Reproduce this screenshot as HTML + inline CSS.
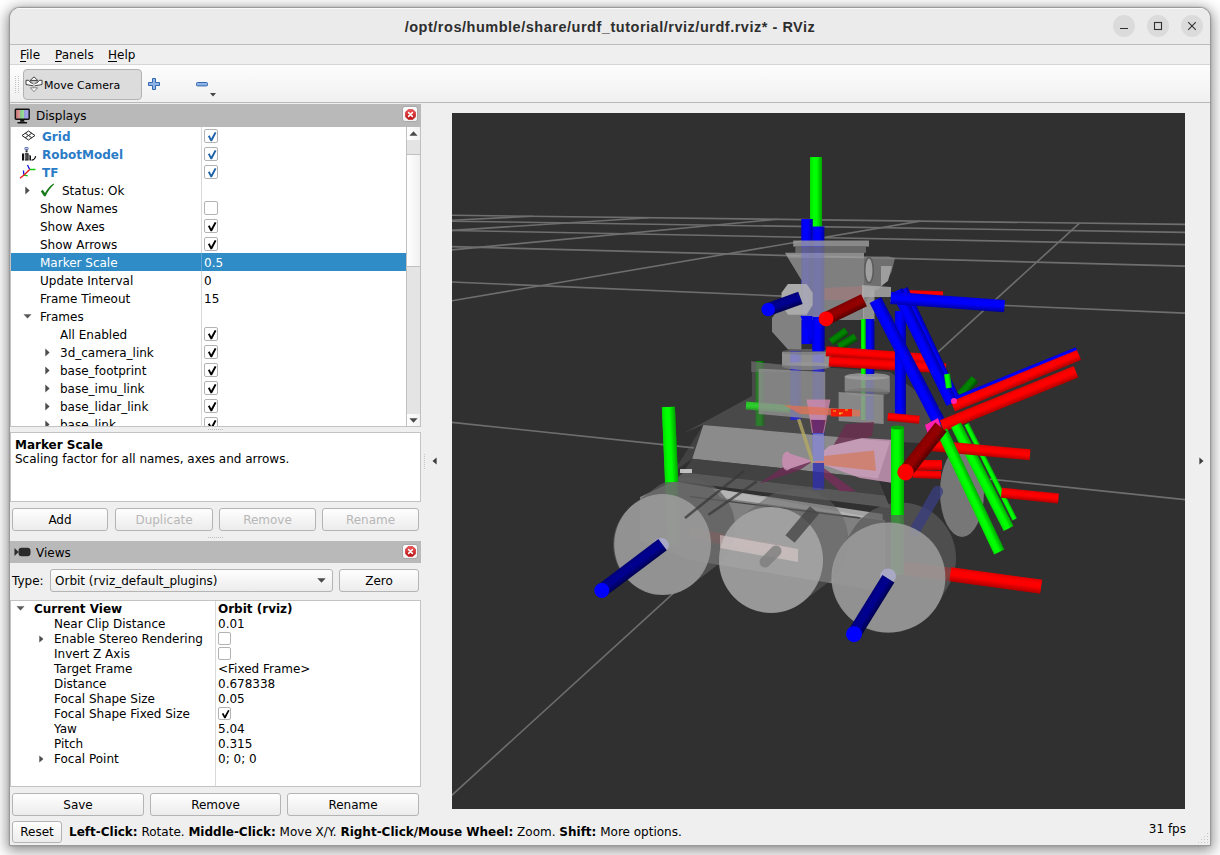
<!DOCTYPE html>
<html><head><meta charset="utf-8"><title>RViz</title>
<style>
*{box-sizing:border-box;margin:0;padding:0}
html,body{width:1220px;height:855px;overflow:hidden;background:#fff}
body{font-family:"DejaVu Sans","Liberation Sans",sans-serif;font-size:12px;color:#000;position:relative;line-height:1}
#win{position:absolute;left:9px;top:7px;width:1202px;height:839px;border:1px solid #9a9a9a;border-radius:11px 11px 0 0;background:#efefef;box-shadow:0 3px 14px 2px rgba(0,0,0,.44),0 0 2px rgba(0,0,0,.2);overflow:hidden}
#c{position:absolute;left:-10px;top:-8px;width:1220px;height:855px}
#c div,#c span,#c svg{position:absolute}
#title{left:10px;top:8px;width:1200px;height:37px;background:#ebebeb;border-top:1px solid #fafafa;border-bottom:1px solid #bcbcbc}
#ttext{left:10px;width:1200px;top:19.5px;text-align:center;font-family:"Liberation Sans","DejaVu Sans",sans-serif;font-weight:bold;font-size:14.5px;letter-spacing:.52px;color:#2e2e2e;white-space:nowrap}
.wb{top:15px;width:22px;height:22px;border-radius:11px;background:#dbdbdb}
#menu{left:10px;top:45px;width:1200px;height:20px;background:#efefef;border-bottom:1px solid #d6d6d6}
.mi{top:49px;white-space:nowrap}
.mi u{text-decoration:underline;text-underline-offset:1.5px}
#tool{left:10px;top:65px;width:1200px;height:38px;background:linear-gradient(#fdfdfd,#f0f0f0);border-bottom:1px solid #b8b8b8}
.t{white-space:nowrap;height:14px;line-height:14px}
.b{font-weight:bold}
.blue{color:#2b7bc7}
.hdr{background:#b9b9b9}
.btn{border:1px solid #b4b4b4;border-radius:3px;background:linear-gradient(#fefefe,#ececec);text-align:center;white-space:nowrap}
.btn.dis{color:#b7b7b7}
.cb{width:14px;height:14px;border:1px solid #b3b3b3;border-radius:2px;background:#fff}
.cbs{width:13px;height:13px;border:1px solid #b3b3b3;border-radius:2px;background:#fff}
.white{background:#fff}
</style></head><body>
<div id="win"><div id="c">
<div id="title"></div>
<div id="ttext">/opt/ros/humble/share/urdf_tutorial/rviz/urdf.rviz* - RViz</div>
<div class="wb" style="left:1113px"></div>
<div class="wb" style="left:1147px"></div>
<div class="wb" style="left:1181px"></div>
<svg style="left:1113px;top:15px" width="90" height="22" viewBox="0 0 90 22"><g stroke="#303030" stroke-width="1.1" fill="none"><path d="M7 13.5h8"/><rect x="41.5" y="7.5" width="7" height="7"/><path d="M75.2 7.2l7.6 7.6M82.8 7.2l-7.6 7.6"/></g></svg>
<div id="menu"></div>
<span class="mi" style="left:20px"><u>F</u>ile</span><span class="mi" style="left:55px"><u>P</u>anels</span><span class="mi" style="left:108px"><u>H</u>elp</span>
<div id="tool"></div>
<div style="left:23px;top:69px;width:119px;height:31px;border:1px solid #b3b3b3;border-radius:4px;background:#dcdcdc"></div>
<span class="t " style="left:44px;top:79px;font-size:11px">Move Camera</span>
<svg style="left:147px;top:77px" width="14" height="14" viewBox="0 0 14 14"><path d="M5.5 1.5h3v4h4v3h-4v4h-3v-4h-4v-3h4z" fill="#8fb4e6" stroke="#3566b0" stroke-width="1"/></svg>
<svg style="left:195px;top:81px" width="14" height="7" viewBox="0 0 14 7"><rect x="1.5" y="1.5" width="11" height="3.4" rx="1" fill="#8fb4e6" stroke="#3566b0" stroke-width="1"/></svg>
<svg style="left:210px;top:93px" width="6" height="4" viewBox="0 0 6 4"><path d="M0 0h6l-3 3.5z" fill="#444"/></svg>
<svg style="left:14px;top:75px" width="6" height="20" viewBox="0 0 6 20"><rect x="1" y="1" width="1" height="1" fill="#c2c2c2"/><rect x="4" y="1" width="1" height="1" fill="#c2c2c2"/><rect x="1" y="3" width="1" height="1" fill="#c2c2c2"/><rect x="4" y="3" width="1" height="1" fill="#c2c2c2"/><rect x="1" y="5" width="1" height="1" fill="#c2c2c2"/><rect x="4" y="5" width="1" height="1" fill="#c2c2c2"/><rect x="1" y="7" width="1" height="1" fill="#c2c2c2"/><rect x="4" y="7" width="1" height="1" fill="#c2c2c2"/><rect x="1" y="9" width="1" height="1" fill="#c2c2c2"/><rect x="4" y="9" width="1" height="1" fill="#c2c2c2"/><rect x="1" y="11" width="1" height="1" fill="#c2c2c2"/><rect x="4" y="11" width="1" height="1" fill="#c2c2c2"/><rect x="1" y="13" width="1" height="1" fill="#c2c2c2"/><rect x="4" y="13" width="1" height="1" fill="#c2c2c2"/><rect x="1" y="15" width="1" height="1" fill="#c2c2c2"/><rect x="4" y="15" width="1" height="1" fill="#c2c2c2"/><rect x="1" y="17" width="1" height="1" fill="#c2c2c2"/><rect x="4" y="17" width="1" height="1" fill="#c2c2c2"/></svg>
<svg style="left:25px;top:76px" width="18" height="17" viewBox="25 76 18 17"><path d="M30.600 82.400Q30.800 80.600 33 80.600M35 80.600Q37.200 80.600 37.400 82.400" fill="none" stroke="#2e2e2e" stroke-width=".9" stroke-dasharray="1.400 .8"/><path d="M26 80.300H28.800Q30 83.600 34 83.600Q38 83.600 39.200 80.300H42V84.500Q34 87.400 26 84.500Z" fill="#fff" stroke="#2e2e2e" stroke-width=".9" stroke-linejoin="round"/><path d="M34 80.400v7.400" stroke="#c2c2c2" stroke-width="1.800"/><path d="M34 76.900l3.800 3.500h-7.600z" fill="#fff" stroke="#2e2e2e" stroke-width=".9" stroke-linejoin="round"/><path d="M34 91.700l3.600-3.900h-7.200z" fill="#fff" stroke="#747474" stroke-width=".9" stroke-linejoin="round"/></svg>
<div class="hdr" style="left:10px;top:104px;width:411px;height:23px"></div>
<span class="t " style="left:36px;top:109px;">Displays</span>
<div style="left:402px;top:106px;width:16px;height:16px;border:1px solid #a9a9a9;border-radius:3px;background:linear-gradient(#fff,#f1f1f1)"></div>
<svg style="left:404.5px;top:108.5px" width="11" height="11" viewBox="0 0 11 11"><defs><linearGradient id="rg402106" x1="0" y1="0" x2="0" y2="1"><stop offset="0" stop-color="#f0585a"/><stop offset="1" stop-color="#b80f12"/></linearGradient></defs><path d="M3.3 .4h4.4l2.9 2.9v4.4l-2.9 2.9H3.3L.4 7.7V3.3z" fill="url(#rg402106)" stroke="#c4181b" stroke-width=".6"/><path d="M3.6 3.6l3.8 3.8M7.4 3.6L3.6 7.4" stroke="#fff" stroke-width="1.5" stroke-linecap="round"/></svg>
<div class="white" style="left:10px;top:127px;width:411px;height:300px;border-left:1px solid #c3c3c3;border-bottom:1px solid #c3c3c3"></div>
<div style="left:11px;top:253px;width:395px;height:18px;background:#308cc6"></div>
<div style="left:201px;top:127px;width:1px;height:300px;background:#d9d9d9"></div>
<div style="left:201px;top:253px;width:1px;height:18px;background:#5fa4d2"></div>
<div id="dtree" style="left:11px;top:127px;width:395px;height:299px;overflow:hidden">
<span class="t b blue" style="left:31px;top:3px;">Grid</span>
<div class="cb" style="left:193px;top:2px"><svg style="left:1.5px;top:.5px" width="10.5" height="11" viewBox="0 0 10 10"><path d="M.9 4.7l1.6-.8 1.5 2.9L7.4 .7l1.6.7-4.2 8.2H3.4z" fill="#1e63a8"/></svg></div>
<span class="t b blue" style="left:31px;top:21px;">RobotModel</span>
<div class="cb" style="left:193px;top:20px"><svg style="left:1.5px;top:.5px" width="10.5" height="11" viewBox="0 0 10 10"><path d="M.9 4.7l1.6-.8 1.5 2.9L7.4 .7l1.6.7-4.2 8.2H3.4z" fill="#1e63a8"/></svg></div>
<span class="t b blue" style="left:31px;top:39px;">TF</span>
<div class="cb" style="left:193px;top:38px"><svg style="left:1.5px;top:.5px" width="10.5" height="11" viewBox="0 0 10 10"><path d="M.9 4.7l1.6-.8 1.5 2.9L7.4 .7l1.6.7-4.2 8.2H3.4z" fill="#1e63a8"/></svg></div>
<svg style="left:14px;top:59px" width="5" height="9" viewBox="0 0 5 9"><path d="M.3 .5L4.6 4.5.3 8.5z" fill="#4d4d4d"/></svg>
<span class="t " style="left:51px;top:57px;">Status: Ok</span>
<span class="t " style="left:29px;top:75px;">Show Names</span>
<div class="cb" style="left:193px;top:74px"></div>
<span class="t " style="left:29px;top:93px;">Show Axes</span>
<div class="cb" style="left:193px;top:92px"><svg style="left:1.5px;top:.5px" width="10.5" height="11" viewBox="0 0 10 10"><path d="M.9 4.7l1.6-.8 1.5 2.9L7.4 .7l1.6.7-4.2 8.2H3.4z" fill="#000"/></svg></div>
<span class="t " style="left:29px;top:111px;">Show Arrows</span>
<div class="cb" style="left:193px;top:110px"><svg style="left:1.5px;top:.5px" width="10.5" height="11" viewBox="0 0 10 10"><path d="M.9 4.7l1.6-.8 1.5 2.9L7.4 .7l1.6.7-4.2 8.2H3.4z" fill="#000"/></svg></div>
<span class="t " style="left:29px;top:129px;color:#fff">Marker Scale</span>
<span class="t " style="left:193px;top:129px;color:#fff">0.5</span>
<span class="t " style="left:29px;top:147px;">Update Interval</span>
<span class="t " style="left:193px;top:147px;">0</span>
<span class="t " style="left:29px;top:165px;">Frame Timeout</span>
<span class="t " style="left:193px;top:165px;">15</span>
<svg style="left:12px;top:187px" width="9" height="5" viewBox="0 0 9 5"><path d="M.5 .3h8L4.5 4.6z" fill="#5a5a5a"/></svg>
<span class="t " style="left:29px;top:183px;">Frames</span>
<span class="t " style="left:49px;top:201px;">All Enabled</span>
<div class="cb" style="left:193px;top:200px"><svg style="left:1.5px;top:.5px" width="10.5" height="11" viewBox="0 0 10 10"><path d="M.9 4.7l1.6-.8 1.5 2.9L7.4 .7l1.6.7-4.2 8.2H3.4z" fill="#000"/></svg></div>
<svg style="left:34px;top:221px" width="5" height="9" viewBox="0 0 5 9"><path d="M.3 .5L4.6 4.5.3 8.5z" fill="#4d4d4d"/></svg>
<span class="t " style="left:49px;top:219px;">3d_camera_link</span>
<div class="cb" style="left:193px;top:218px"><svg style="left:1.5px;top:.5px" width="10.5" height="11" viewBox="0 0 10 10"><path d="M.9 4.7l1.6-.8 1.5 2.9L7.4 .7l1.6.7-4.2 8.2H3.4z" fill="#000"/></svg></div>
<svg style="left:34px;top:239px" width="5" height="9" viewBox="0 0 5 9"><path d="M.3 .5L4.6 4.5.3 8.5z" fill="#4d4d4d"/></svg>
<span class="t " style="left:49px;top:237px;">base_footprint</span>
<div class="cb" style="left:193px;top:236px"><svg style="left:1.5px;top:.5px" width="10.5" height="11" viewBox="0 0 10 10"><path d="M.9 4.7l1.6-.8 1.5 2.9L7.4 .7l1.6.7-4.2 8.2H3.4z" fill="#000"/></svg></div>
<svg style="left:34px;top:257px" width="5" height="9" viewBox="0 0 5 9"><path d="M.3 .5L4.6 4.5.3 8.5z" fill="#4d4d4d"/></svg>
<span class="t " style="left:49px;top:255px;">base_imu_link</span>
<div class="cb" style="left:193px;top:254px"><svg style="left:1.5px;top:.5px" width="10.5" height="11" viewBox="0 0 10 10"><path d="M.9 4.7l1.6-.8 1.5 2.9L7.4 .7l1.6.7-4.2 8.2H3.4z" fill="#000"/></svg></div>
<svg style="left:34px;top:275px" width="5" height="9" viewBox="0 0 5 9"><path d="M.3 .5L4.6 4.5.3 8.5z" fill="#4d4d4d"/></svg>
<span class="t " style="left:49px;top:273px;">base_lidar_link</span>
<div class="cb" style="left:193px;top:272px"><svg style="left:1.5px;top:.5px" width="10.5" height="11" viewBox="0 0 10 10"><path d="M.9 4.7l1.6-.8 1.5 2.9L7.4 .7l1.6.7-4.2 8.2H3.4z" fill="#000"/></svg></div>
<svg style="left:34px;top:293px" width="5" height="9" viewBox="0 0 5 9"><path d="M.3 .5L4.6 4.5.3 8.5z" fill="#4d4d4d"/></svg>
<span class="t " style="left:49px;top:291px;">base_link</span>
<div class="cb" style="left:193px;top:290px"><svg style="left:1.5px;top:.5px" width="10.5" height="11" viewBox="0 0 10 10"><path d="M.9 4.7l1.6-.8 1.5 2.9L7.4 .7l1.6.7-4.2 8.2H3.4z" fill="#000"/></svg></div>
<svg style="left:10px;top:3px" width="15" height="11" viewBox="0 0 15 11"><g fill="none" stroke="#222" stroke-width="1"><path d="M7.5 1L14 5.5 7.5 10 1 5.5z"/><path d="M4.2 3.2l6.6 4.6M10.8 3.2L4.2 7.8"/></g></svg>
<svg style="left:9px;top:19px" width="17" height="16" viewBox="0 0 17 16"><rect x="4.5" y="1.2" width="4" height="2.6" rx="1.2" fill="#223a8a"/><rect x="4.8" y="1.9" width="3.4" height=".9" fill="#dfe6ff"/><rect x="5.6" y="4.3" width="2" height="2" fill="#222"/><path d="M2 7.5h2v7H2zM4.8 7.2h3.8v7.3H4.8zM9.4 8.5l1.6 1.5v4.5H9.4z" fill="#111"/><path d="M5.6 8.2v5.5M7 8.2v5.5" stroke="#ddd" stroke-width=".5"/><path d="M11.5 14.2c2.5 0 3.5-1.5 4.2-4" fill="none" stroke="#111" stroke-width="1.2"/></svg>
<svg style="left:8px;top:37px" width="18" height="16" viewBox="0 0 18 16"><g fill="none" stroke-width="1.3"><path d="M8.5 1l2.2 4.5" stroke="#1414e6"/><path d="M4.5 6.5l.3 4.2" stroke="#1414e6"/><path d="M10.7 5.5h5.8" stroke="#14c814"/><path d="M5 11l3.8.9" stroke="#14c814"/><path d="M10.7 5.5L5 11" stroke="#e61414"/><path d="M5 11l-4 3.2" stroke="#e61414"/></g></svg>
<svg style="left:29px;top:56px" width="15" height="14" viewBox="0 0 15 14"><path d="M.8 8.2l2-1.4 2.2 3.2C7.5 5.6 10 2.8 13.6 .6l.6.7C10.8 4.2 8 8.2 5.6 13.2H4z" fill="#1a7a1a"/></svg>
</div>
<div style="left:406px;top:127px;width:15px;height:300px;background:#e4e4e4;border-left:1px solid #c0c0c0;border-right:1px solid #c0c0c0"></div>
<div style="left:407px;top:127px;width:13px;height:13px;background:linear-gradient(90deg,#fff,#f2f2f2)"></div>
<div style="left:407px;top:414px;width:13px;height:13px;background:linear-gradient(90deg,#fff,#f2f2f2)"></div>
<div style="left:406px;top:154px;width:15px;height:113px;background:linear-gradient(90deg,#fff,#f0f0f0);border:1px solid #c0c0c0"></div>
<svg style="left:409px;top:131px" width="9" height="5" viewBox="0 0 9 5"><path d="M4.5 .3L8.6 4.7H.4z" fill="#4a4a4a"/></svg>
<svg style="left:409px;top:418px" width="9" height="5" viewBox="0 0 9 5"><path d="M4.5 4.7L8.6 .3H.4z" fill="#4a4a4a"/></svg>
<div style="left:406px;top:426px;width:15px;height:1px;background:#c0c0c0"></div>
<svg style="left:13.5px;top:108px" width="16.5" height="16" viewBox="0 0 16 16" preserveAspectRatio="none"><defs><linearGradient id="mg" x1="0" y1="0" x2="1" y2="0"><stop offset="0" stop-color="#c77"/><stop offset=".3" stop-color="#d99"/><stop offset=".36" stop-color="#8c8"/><stop offset=".63" stop-color="#9d9"/><stop offset=".68" stop-color="#99d"/><stop offset="1" stop-color="#aae"/></linearGradient></defs><rect x=".6" y=".6" width="14.8" height="11.3" rx="1.4" fill="#111"/><rect x="2" y="2" width="12" height="8.5" fill="url(#mg)"/><path d="M6.3 12h3.4l.6 1.8H5.7z" fill="#111"/><rect x="3.2" y="14" width="9.6" height="1.5" rx=".7" fill="#111"/></svg>
<svg style="left:208px;top:429px" width="16" height="1" viewBox="0 0 16 1"><rect x="0" y="0" width="1" height="1" fill="#bdbdbd"/><rect x="2" y="0" width="1" height="1" fill="#bdbdbd"/><rect x="4" y="0" width="1" height="1" fill="#bdbdbd"/><rect x="6" y="0" width="1" height="1" fill="#bdbdbd"/><rect x="8" y="0" width="1" height="1" fill="#bdbdbd"/><rect x="10" y="0" width="1" height="1" fill="#bdbdbd"/><rect x="12" y="0" width="1" height="1" fill="#bdbdbd"/><rect x="14" y="0" width="1" height="1" fill="#bdbdbd"/></svg>
<svg style="left:208px;top:537px" width="16" height="1" viewBox="0 0 16 1"><rect x="0" y="0" width="1" height="1" fill="#bdbdbd"/><rect x="2" y="0" width="1" height="1" fill="#bdbdbd"/><rect x="4" y="0" width="1" height="1" fill="#bdbdbd"/><rect x="6" y="0" width="1" height="1" fill="#bdbdbd"/><rect x="8" y="0" width="1" height="1" fill="#bdbdbd"/><rect x="10" y="0" width="1" height="1" fill="#bdbdbd"/><rect x="12" y="0" width="1" height="1" fill="#bdbdbd"/><rect x="14" y="0" width="1" height="1" fill="#bdbdbd"/></svg>
<div class="white" style="left:10px;top:432px;width:411px;height:70px;border:1px solid #c3c3c3"></div>
<span class="t b" style="left:15px;top:438px;">Marker Scale</span>
<span class="t " style="left:15px;top:452px;">Scaling factor for all names, axes and arrows.</span>
<div class="btn" style="left:12px;top:508px;width:96px;height:23px;line-height:22px">Add</div>
<div class="btn dis" style="left:115px;top:508px;width:98px;height:23px;line-height:22px">Duplicate</div>
<div class="btn dis" style="left:219px;top:508px;width:97px;height:23px;line-height:22px">Remove</div>
<div class="btn dis" style="left:322px;top:508px;width:97px;height:23px;line-height:22px">Rename</div>
<div class="hdr" style="left:10px;top:541px;width:411px;height:22px"></div>
<span class="t " style="left:36px;top:546px;">Views</span>
<div style="left:402px;top:544px;width:16px;height:15px;border:1px solid #a9a9a9;border-radius:3px;background:linear-gradient(#fff,#f1f1f1)"></div>
<svg style="left:404.5px;top:546.0px" width="11" height="11" viewBox="0 0 11 11"><defs><linearGradient id="rg402544" x1="0" y1="0" x2="0" y2="1"><stop offset="0" stop-color="#f0585a"/><stop offset="1" stop-color="#b80f12"/></linearGradient></defs><path d="M3.3 .4h4.4l2.9 2.9v4.4l-2.9 2.9H3.3L.4 7.7V3.3z" fill="url(#rg402544)" stroke="#c4181b" stroke-width=".6"/><path d="M3.6 3.6l3.8 3.8M7.4 3.6L3.6 7.4" stroke="#fff" stroke-width="1.5" stroke-linecap="round"/></svg>
<svg style="left:14px;top:547px" width="17" height="10" viewBox="0 0 17 10"><path d="M.5 1l4 4-4 4z" fill="#2b2b2b"/><rect x="4.5" y=".8" width="12" height="8.4" rx="3" fill="#2b2b2b"/></svg>
<span class="t " style="left:12px;top:574px;">Type:</span>
<div class="btn" style="left:50px;top:569px;width:283px;height:23px"></div>
<span class="t " style="left:55px;top:574px;">Orbit (rviz_default_plugins)</span>
<svg style="left:317px;top:578px" width="9" height="5" viewBox="0 0 9 5"><path d="M.3 .3h8.4L4.5 4.8z" fill="#4a4a4a"/></svg>
<div class="btn" style="left:339px;top:569px;width:80px;height:23px;line-height:22px">Zero</div>
<div class="white" style="left:10px;top:600px;width:411px;height:187px;border:1px solid #c3c3c3"></div>
<div style="left:215px;top:601px;width:1px;height:185px;background:#d9d9d9"></div>
<svg style="left:16px;top:606px" width="9" height="5" viewBox="0 0 9 5"><path d="M.5 .3h8L4.5 4.6z" fill="#5a5a5a"/></svg>
<span class="t b" style="left:34px;top:602px;">Current View</span>
<span class="t b" style="left:218px;top:602px;">Orbit (rviz)</span>
<span class="t " style="left:54px;top:617px;">Near Clip Distance</span>
<span class="t " style="left:218px;top:617px;">0.01</span>
<svg style="left:39px;top:635px" width="5" height="8" viewBox="0 0 5 8"><path d="M.3 .4L4.4 4 .3 7.6z" fill="#4d4d4d"/></svg>
<span class="t " style="left:54px;top:632px;">Enable Stereo Rendering</span>
<div class="cbs" style="left:218px;top:632px"></div>
<span class="t " style="left:54px;top:647px;">Invert Z Axis</span>
<div class="cbs" style="left:218px;top:647px"></div>
<span class="t " style="left:54px;top:662px;">Target Frame</span>
<span class="t " style="left:218px;top:662px;">&lt;Fixed Frame&gt;</span>
<span class="t " style="left:54px;top:677px;">Distance</span>
<span class="t " style="left:218px;top:677px;">0.678338</span>
<span class="t " style="left:54px;top:692px;">Focal Shape Size</span>
<span class="t " style="left:218px;top:692px;">0.05</span>
<span class="t " style="left:54px;top:707px;">Focal Shape Fixed Size</span>
<div class="cbs" style="left:218px;top:707px"><svg style="left:1.5px;top:.5px" width="9.5" height="10" viewBox="0 0 10 10"><path d="M.9 4.7l1.6-.8 1.5 2.9L7.4 .7l1.6.7-4.2 8.2H3.4z" fill="#000"/></svg></div>
<span class="t " style="left:54px;top:722px;">Yaw</span>
<span class="t " style="left:218px;top:722px;">5.04</span>
<span class="t " style="left:54px;top:737px;">Pitch</span>
<span class="t " style="left:218px;top:737px;">0.315</span>
<svg style="left:39px;top:755px" width="5" height="8" viewBox="0 0 5 8"><path d="M.3 .4L4.4 4 .3 7.6z" fill="#4d4d4d"/></svg>
<span class="t " style="left:54px;top:752px;">Focal Point</span>
<span class="t " style="left:218px;top:752px;">0; 0; 0</span>
<div class="btn" style="left:12px;top:793px;width:132px;height:23px;line-height:22px">Save</div>
<div class="btn" style="left:150px;top:793px;width:131px;height:23px;line-height:22px">Remove</div>
<div class="btn" style="left:287px;top:793px;width:132px;height:23px;line-height:22px">Rename</div>
<div class="btn" style="left:12px;top:821px;width:50px;height:22px;line-height:21.5px">Reset</div>
<span class="t" style="left:69px;top:825px"><b>Left-Click:</b> Rotate. <b>Middle-Click:</b> Move X/Y. <b>Right-Click/Mouse Wheel:</b> Zoom. <b>Shift:</b> More options.</span>
<span class="t" style="left:1100px;top:822px;width:86px;text-align:right">31 fps</span>
<svg style="left:1197px;top:832px" width="12" height="12" viewBox="0 0 12 12"><rect x="10" y="1" width="1" height="1" fill="#c6c6c6"/><rect x="7" y="4" width="1" height="1" fill="#c6c6c6"/><rect x="10" y="4" width="1" height="1" fill="#c6c6c6"/><rect x="4" y="7" width="1" height="1" fill="#c6c6c6"/><rect x="7" y="7" width="1" height="1" fill="#c6c6c6"/><rect x="10" y="7" width="1" height="1" fill="#c6c6c6"/><rect x="1" y="10" width="1" height="1" fill="#c6c6c6"/><rect x="4" y="10" width="1" height="1" fill="#c6c6c6"/><rect x="7" y="10" width="1" height="1" fill="#c6c6c6"/><rect x="10" y="10" width="1" height="1" fill="#c6c6c6"/></svg>
<svg style="left:432px;top:457px" width="5" height="8" viewBox="0 0 5 8"><path d="M4.6 .4L.5 4l4.1 3.6z" fill="#3c3c3c"/></svg>
<svg style="left:1199px;top:457px" width="5" height="8" viewBox="0 0 5 8"><path d="M.4 .4L4.5 4 .4 7.6z" fill="#3c3c3c"/></svg>
<svg style="left:424px;top:454px" width="1" height="16" viewBox="0 0 1 16"><rect x="0" y="0" width="1" height="1" fill="#c6c6c6"/><rect x="0" y="2" width="1" height="1" fill="#c6c6c6"/><rect x="0" y="4" width="1" height="1" fill="#c6c6c6"/><rect x="0" y="6" width="1" height="1" fill="#c6c6c6"/><rect x="0" y="8" width="1" height="1" fill="#c6c6c6"/><rect x="0" y="10" width="1" height="1" fill="#c6c6c6"/><rect x="0" y="12" width="1" height="1" fill="#c6c6c6"/><rect x="0" y="14" width="1" height="1" fill="#c6c6c6"/></svg>
<div id="view" style="left:452px;top:113px;width:733px;height:696px;background:#303030;overflow:hidden">
<svg style="left:0;top:0" width="733" height="696" viewBox="452 113 733 696"><defs><linearGradient id="c1" gradientUnits="userSpaceOnUse" x1="810.0" y1="192.0" x2="822.0" y2="192.0"><stop offset="0" stop-color="#00dc00"/><stop offset=".3" stop-color="#00ff00"/><stop offset=".55" stop-color="#00ff00"/><stop offset="1" stop-color="#00a400"/></linearGradient><linearGradient id="c2" gradientUnits="userSpaceOnUse" x1="801.2" y1="281.5" x2="812.8" y2="281.5"><stop offset="0" stop-color="#0000dc"/><stop offset=".3" stop-color="#0000ff"/><stop offset=".55" stop-color="#0000ff"/><stop offset="1" stop-color="#0000a4"/></linearGradient><linearGradient id="c3" gradientUnits="userSpaceOnUse" x1="812.4" y1="358.2" x2="824.4" y2="358.2"><stop offset="0" stop-color="#0000dc"/><stop offset=".3" stop-color="#0000ff"/><stop offset=".55" stop-color="#0000ff"/><stop offset="1" stop-color="#0000a4"/></linearGradient><linearGradient id="c4" gradientUnits="userSpaceOnUse" x1="790.2" y1="385.5" x2="801.2" y2="385.5"><stop offset="0" stop-color="#0000dc"/><stop offset=".3" stop-color="#0000ff"/><stop offset=".55" stop-color="#0000ff"/><stop offset="1" stop-color="#0000a4"/></linearGradient><linearGradient id="c5" gradientUnits="userSpaceOnUse" x1="836.4" y1="333.1" x2="841.1" y2="339.6"><stop offset="0" stop-color="#006c00"/><stop offset=".3" stop-color="#008400"/><stop offset=".55" stop-color="#008400"/><stop offset="1" stop-color="#004800"/></linearGradient><linearGradient id="c6" gradientUnits="userSpaceOnUse" x1="845.3" y1="338.5" x2="849.4" y2="345.3"><stop offset="0" stop-color="#006c00"/><stop offset=".3" stop-color="#008400"/><stop offset=".55" stop-color="#008400"/><stop offset="1" stop-color="#004800"/></linearGradient><linearGradient id="c7" gradientUnits="userSpaceOnUse" x1="755.5" y1="393.5" x2="764.5" y2="393.5"><stop offset="0" stop-color="#006c00"/><stop offset=".3" stop-color="#008400"/><stop offset=".55" stop-color="#008400"/><stop offset="1" stop-color="#004800"/></linearGradient><linearGradient id="c8" gradientUnits="userSpaceOnUse" x1="768.3" y1="403.3" x2="767.7" y2="411.2"><stop offset="0" stop-color="#00dc00"/><stop offset=".3" stop-color="#00ff00"/><stop offset=".55" stop-color="#00ff00"/><stop offset="1" stop-color="#00a400"/></linearGradient><linearGradient id="c9" gradientUnits="userSpaceOnUse" x1="861.0" y1="369.5" x2="866.0" y2="369.5"><stop offset="0" stop-color="#00dc00"/><stop offset=".3" stop-color="#00ff00"/><stop offset=".55" stop-color="#00ff00"/><stop offset="1" stop-color="#00a400"/></linearGradient><linearGradient id="c10" gradientUnits="userSpaceOnUse" x1="865.8" y1="369.5" x2="874.2" y2="369.5"><stop offset="0" stop-color="#0000dc"/><stop offset=".3" stop-color="#0000ff"/><stop offset=".55" stop-color="#0000ff"/><stop offset="1" stop-color="#0000a4"/></linearGradient><linearGradient id="c11" gradientUnits="userSpaceOnUse" x1="971.9" y1="570.5" x2="970.1" y2="584.2"><stop offset="0" stop-color="#e00000"/><stop offset=".3" stop-color="#ff0000"/><stop offset=".55" stop-color="#ff0000"/><stop offset="1" stop-color="#b40000"/></linearGradient><linearGradient id="c12" gradientUnits="userSpaceOnUse" x1="891.0" y1="501.0" x2="904.0" y2="501.0"><stop offset="0" stop-color="#00dc00"/><stop offset=".3" stop-color="#00ff00"/><stop offset=".55" stop-color="#00ff00"/><stop offset="1" stop-color="#00a400"/></linearGradient><linearGradient id="c13" gradientUnits="userSpaceOnUse" x1="664.7" y1="476.3" x2="677.7" y2="475.7"><stop offset="0" stop-color="#00dc00"/><stop offset=".3" stop-color="#00ff00"/><stop offset=".55" stop-color="#00ff00"/><stop offset="1" stop-color="#00a400"/></linearGradient><linearGradient id="c14" gradientUnits="userSpaceOnUse" x1="741.0" y1="537.1" x2="739.0" y2="547.9"><stop offset="0" stop-color="#e00000"/><stop offset=".3" stop-color="#ff0000"/><stop offset=".55" stop-color="#ff0000"/><stop offset="1" stop-color="#b40000"/></linearGradient><linearGradient id="c15" gradientUnits="userSpaceOnUse" x1="812.4" y1="334.0" x2="824.4" y2="334.0"><stop offset="0" stop-color="#0000dc"/><stop offset=".3" stop-color="#0000ff"/><stop offset=".55" stop-color="#0000ff"/><stop offset="1" stop-color="#0000a4"/></linearGradient><linearGradient id="c16" gradientUnits="userSpaceOnUse" x1="782.1" y1="297.6" x2="786.5" y2="309.8"><stop offset="0" stop-color="#000078"/><stop offset=".3" stop-color="#00008f"/><stop offset=".55" stop-color="#00008f"/><stop offset="1" stop-color="#000050"/></linearGradient><linearGradient id="c17" gradientUnits="userSpaceOnUse" x1="842.0" y1="303.5" x2="848.0" y2="315.6"><stop offset="0" stop-color="#7a0000"/><stop offset=".3" stop-color="#930000"/><stop offset=".55" stop-color="#930000"/><stop offset="1" stop-color="#520000"/></linearGradient><linearGradient id="c18" gradientUnits="userSpaceOnUse" x1="861.0" y1="346.5" x2="866.0" y2="346.5"><stop offset="0" stop-color="#00dc00"/><stop offset=".3" stop-color="#00ff00"/><stop offset=".55" stop-color="#00ff00"/><stop offset="1" stop-color="#00a400"/></linearGradient><linearGradient id="c19" gradientUnits="userSpaceOnUse" x1="865.8" y1="346.5" x2="874.2" y2="346.5"><stop offset="0" stop-color="#0000dc"/><stop offset=".3" stop-color="#0000ff"/><stop offset=".55" stop-color="#0000ff"/><stop offset="1" stop-color="#0000a4"/></linearGradient><linearGradient id="c20" gradientUnits="userSpaceOnUse" x1="880.4" y1="350.3" x2="879.6" y2="360.3"><stop offset="0" stop-color="#e00000"/><stop offset=".3" stop-color="#ff0000"/><stop offset=".55" stop-color="#ff0000"/><stop offset="1" stop-color="#b40000"/></linearGradient><linearGradient id="c21" gradientUnits="userSpaceOnUse" x1="887.8" y1="360.0" x2="887.2" y2="370.0"><stop offset="0" stop-color="#e00000"/><stop offset=".3" stop-color="#ff0000"/><stop offset=".55" stop-color="#ff0000"/><stop offset="1" stop-color="#b40000"/></linearGradient><linearGradient id="c22" gradientUnits="userSpaceOnUse" x1="924.6" y1="290.6" x2="924.4" y2="295.6"><stop offset="0" stop-color="#e00000"/><stop offset=".3" stop-color="#ff0000"/><stop offset=".55" stop-color="#ff0000"/><stop offset="1" stop-color="#b40000"/></linearGradient><linearGradient id="c23" gradientUnits="userSpaceOnUse" x1="894.9" y1="365.5" x2="905.9" y2="365.5"><stop offset="0" stop-color="#0000dc"/><stop offset=".3" stop-color="#0000ff"/><stop offset=".55" stop-color="#0000ff"/><stop offset="1" stop-color="#0000a4"/></linearGradient><linearGradient id="c24" gradientUnits="userSpaceOnUse" x1="926.4" y1="345.6" x2="933.6" y2="342.1"><stop offset="0" stop-color="#0000dc"/><stop offset=".3" stop-color="#0000ff"/><stop offset=".55" stop-color="#0000ff"/><stop offset="1" stop-color="#0000a4"/></linearGradient><linearGradient id="c25" gradientUnits="userSpaceOnUse" x1="919.1" y1="349.7" x2="929.9" y2="344.4"><stop offset="0" stop-color="#0000dc"/><stop offset=".3" stop-color="#0000ff"/><stop offset=".55" stop-color="#0000ff"/><stop offset="1" stop-color="#0000a4"/></linearGradient><linearGradient id="c26" gradientUnits="userSpaceOnUse" x1="948.0" y1="295.9" x2="947.2" y2="308.1"><stop offset="0" stop-color="#0000dc"/><stop offset=".3" stop-color="#0000ff"/><stop offset=".55" stop-color="#0000ff"/><stop offset="1" stop-color="#0000a4"/></linearGradient><linearGradient id="c27" gradientUnits="userSpaceOnUse" x1="901.9" y1="365.0" x2="913.5" y2="359.0"><stop offset="0" stop-color="#0000dc"/><stop offset=".3" stop-color="#0000ff"/><stop offset=".55" stop-color="#0000ff"/><stop offset="1" stop-color="#0000a4"/></linearGradient><linearGradient id="c28" gradientUnits="userSpaceOnUse" x1="903.9" y1="414.3" x2="903.2" y2="422.3"><stop offset="0" stop-color="#e00000"/><stop offset=".3" stop-color="#ff0000"/><stop offset=".55" stop-color="#ff0000"/><stop offset="1" stop-color="#b40000"/></linearGradient><linearGradient id="c29" gradientUnits="userSpaceOnUse" x1="964.2" y1="384.0" x2="971.0" y2="389.9"><stop offset="0" stop-color="#006c00"/><stop offset=".3" stop-color="#008400"/><stop offset=".55" stop-color="#008400"/><stop offset="1" stop-color="#004800"/></linearGradient><linearGradient id="c30" gradientUnits="userSpaceOnUse" x1="945.0" y1="381.4" x2="951.0" y2="380.6"><stop offset="0" stop-color="#00dc00"/><stop offset=".3" stop-color="#00ff00"/><stop offset=".55" stop-color="#00ff00"/><stop offset="1" stop-color="#00a400"/></linearGradient><linearGradient id="c31" gradientUnits="userSpaceOnUse" x1="1015.5" y1="371.7" x2="1019.0" y2="380.1"><stop offset="0" stop-color="#0000dc"/><stop offset=".3" stop-color="#0000ff"/><stop offset=".55" stop-color="#0000ff"/><stop offset="1" stop-color="#0000a4"/></linearGradient><linearGradient id="c32" gradientUnits="userSpaceOnUse" x1="1013.9" y1="375.7" x2="1018.1" y2="385.8"><stop offset="0" stop-color="#e00000"/><stop offset=".3" stop-color="#ff0000"/><stop offset=".55" stop-color="#ff0000"/><stop offset="1" stop-color="#b40000"/></linearGradient><linearGradient id="c33" gradientUnits="userSpaceOnUse" x1="1006.7" y1="393.2" x2="1011.3" y2="404.5"><stop offset="0" stop-color="#e00000"/><stop offset=".3" stop-color="#ff0000"/><stop offset=".55" stop-color="#ff0000"/><stop offset="1" stop-color="#b40000"/></linearGradient><linearGradient id="c34" gradientUnits="userSpaceOnUse" x1="988.4" y1="472.8" x2="992.9" y2="470.5"><stop offset="0" stop-color="#00dc00"/><stop offset=".3" stop-color="#00ff00"/><stop offset=".55" stop-color="#00ff00"/><stop offset="1" stop-color="#00a400"/></linearGradient><linearGradient id="c35" gradientUnits="userSpaceOnUse" x1="977.4" y1="479.3" x2="987.2" y2="474.3"><stop offset="0" stop-color="#00dc00"/><stop offset=".3" stop-color="#00ff00"/><stop offset=".55" stop-color="#00ff00"/><stop offset="1" stop-color="#00a400"/></linearGradient><linearGradient id="c36" gradientUnits="userSpaceOnUse" x1="980.4" y1="444.7" x2="979.3" y2="455.7"><stop offset="0" stop-color="#e00000"/><stop offset=".3" stop-color="#ff0000"/><stop offset=".55" stop-color="#ff0000"/><stop offset="1" stop-color="#b40000"/></linearGradient><linearGradient id="c37" gradientUnits="userSpaceOnUse" x1="965.5" y1="493.9" x2="975.8" y2="489.1"><stop offset="0" stop-color="#00dc00"/><stop offset=".3" stop-color="#00ff00"/><stop offset=".55" stop-color="#00ff00"/><stop offset="1" stop-color="#00a400"/></linearGradient><linearGradient id="c38" gradientUnits="userSpaceOnUse" x1="1030.4" y1="490.6" x2="1029.4" y2="500.5"><stop offset="0" stop-color="#e00000"/><stop offset=".3" stop-color="#ff0000"/><stop offset=".55" stop-color="#ff0000"/><stop offset="1" stop-color="#b40000"/></linearGradient><linearGradient id="c39" gradientUnits="userSpaceOnUse" x1="929.5" y1="460.0" x2="929.5" y2="470.0"><stop offset="0" stop-color="#e00000"/><stop offset=".3" stop-color="#ff0000"/><stop offset=".55" stop-color="#ff0000"/><stop offset="1" stop-color="#b40000"/></linearGradient><linearGradient id="c40" gradientUnits="userSpaceOnUse" x1="927.1" y1="470.5" x2="926.9" y2="478.5"><stop offset="0" stop-color="#e00000"/><stop offset=".3" stop-color="#ff0000"/><stop offset=".55" stop-color="#ff0000"/><stop offset="1" stop-color="#b40000"/></linearGradient><linearGradient id="c41" gradientUnits="userSpaceOnUse" x1="891.0" y1="471.0" x2="904.0" y2="471.0"><stop offset="0" stop-color="#00dc00"/><stop offset=".3" stop-color="#00ff00"/><stop offset=".55" stop-color="#00ff00"/><stop offset="1" stop-color="#00a400"/></linearGradient><linearGradient id="c42" gradientUnits="userSpaceOnUse" x1="917.5" y1="445.1" x2="929.0" y2="454.1"><stop offset="0" stop-color="#7a0000"/><stop offset=".3" stop-color="#930000"/><stop offset=".55" stop-color="#930000"/><stop offset="1" stop-color="#520000"/></linearGradient><linearGradient id="c43" gradientUnits="userSpaceOnUse" x1="628.0" y1="562.0" x2="636.4" y2="573.1"><stop offset="0" stop-color="#000078"/><stop offset=".3" stop-color="#00008f"/><stop offset=".55" stop-color="#00008f"/><stop offset="1" stop-color="#000050"/></linearGradient><linearGradient id="c44" gradientUnits="userSpaceOnUse" x1="865.3" y1="602.8" x2="877.1" y2="610.1"><stop offset="0" stop-color="#000078"/><stop offset=".3" stop-color="#00008f"/><stop offset=".55" stop-color="#00008f"/><stop offset="1" stop-color="#000050"/></linearGradient><linearGradient id="c45" gradientUnits="userSpaceOnUse" x1="996.6" y1="573.5" x2="994.7" y2="587.2"><stop offset="0" stop-color="#e00000"/><stop offset=".3" stop-color="#ff0000"/><stop offset=".55" stop-color="#ff0000"/><stop offset="1" stop-color="#b40000"/></linearGradient><linearGradient id="c46" gradientUnits="userSpaceOnUse" x1="663.6" y1="444.8" x2="676.6" y2="444.2"><stop offset="0" stop-color="#00dc00"/><stop offset=".3" stop-color="#00ff00"/><stop offset=".55" stop-color="#00ff00"/><stop offset="1" stop-color="#00a400"/></linearGradient></defs>
<g stroke="#6e6e6e" stroke-width="1.6" fill="none">
<path d="M440.0 220.8L532.7 216.2"/>
<path d="M440.0 231.2L648.8 217.7"/>
<path d="M440.0 251.0L777.2 219.3"/>
<path d="M440.0 302.8L919.9 221.1"/>
<path d="M440.0 806.0L702.0 567.2"/>
<path d="M936.0 353.9L1079.5 223.1"/>
<path d="M440.0 421.1L694.0 447.9"/>
<path d="M990.0 479.1L1200.0 501.2"/>
<path d="M440.0 281.5L783.0 296.1"/>
<path d="M890.0 300.6L1200.0 313.8"/>
<path d="M440.0 246.3L1200.0 266.5"/>
<path d="M440.0 230.2L1200.0 244.9"/>
<path d="M440.0 221.0L1200.0 232.6"/>
<path d="M440.0 215.1L1200.0 224.6"/>
</g>
<line x1="816.0" y1="157.0" x2="816.0" y2="227.0" stroke="url(#c1)" stroke-width="12"/>
<line x1="807.0" y1="219.0" x2="807.0" y2="344.0" stroke="url(#c2)" stroke-width="11.5"/>
<line x1="818.4" y1="226.5" x2="818.4" y2="490.0" stroke="url(#c3)" stroke-width="12"/>
<line x1="795.7" y1="351.0" x2="795.7" y2="420.0" stroke="url(#c4)" stroke-width="11"/>
<ellipse cx="962" cy="492" rx="22" ry="45" fill="rgba(150,150,150,0.7)" />
<line x1="831.0" y1="342.0" x2="846.5" y2="330.7" stroke="url(#c5)" stroke-width="8"/>
<line x1="839.0" y1="347.0" x2="855.7" y2="336.8" stroke="url(#c6)" stroke-width="8"/>
<line x1="760.0" y1="361.0" x2="760.0" y2="426.0" stroke="url(#c7)" stroke-width="9"/>
<line x1="746.0" y1="405.5" x2="790.0" y2="409.0" stroke="url(#c8)" stroke-width="8"/>
<line x1="863.5" y1="319.0" x2="863.5" y2="420.0" stroke="url(#c9)" stroke-width="5"/>
<line x1="870.0" y1="319.0" x2="870.0" y2="420.0" stroke="url(#c10)" stroke-width="8.5"/>
<line x1="901.0" y1="568.0" x2="1041.0" y2="586.7" stroke="url(#c11)" stroke-width="13.8"/>
<line x1="897.5" y1="427.0" x2="897.5" y2="575.0" stroke="url(#c12)" stroke-width="13"/>
<line x1="668.4" y1="407.0" x2="674.0" y2="545.0" stroke="url(#c13)" stroke-width="13"/>
<line x1="690.0" y1="533.0" x2="790.0" y2="552.0" stroke="url(#c14)" stroke-width="11"/>
<rect x="793.2" y="240.5" width="75.8" height="6.1" fill="rgba(160,160,160,0.8)" />
<rect x="795.3" y="246.6" width="70.7" height="6.2" fill="rgba(118,118,118,0.8)" />
<polygon points="785.0,252.8 864.0,252.8 864.0,258.0 788.0,258.0" fill="rgba(162,162,162,0.8)" />
<polygon points="788.0,258.0 864.0,258.0 864.0,320.0 801.4,320.0 801.4,280.0" fill="rgba(148,148,148,0.8)" />
<rect x="863" y="287" width="11.5" height="34.0" fill="rgba(170,170,170,0.8)" />
<polygon points="824.4,288.0 864.0,286.0 864.0,300.0 824.4,300.0" fill="rgba(215,120,125,.28)" />
<polygon points="864.0,256.5 888.5,256.5 895.0,258.0 891.5,272.0 886.5,281.5 880.0,288.0 872.0,292.0 864.0,306.0" fill="rgba(128,128,128,0.8)" />
<polygon points="881.0,266.0 892.0,266.0 888.0,281.0 881.0,286.0" fill="rgba(170,170,170,0.8)" />
<polygon points="862.0,285.0 891.0,287.0 891.0,297.0 862.0,297.0" fill="rgba(175,175,175,0.8)" />
<ellipse cx="869" cy="270.2" rx="4.3" ry="12.5" fill="rgba(165,165,165,0.9)" stroke="#5c5c5c" stroke-width="1.6"/>
<polygon points="772.0,318.0 781.6,305.0 781.6,292.7 788.0,284.0 801.4,284.0 801.4,349.5 788.0,349.5 772.0,331.7" fill="rgba(150,150,150,0.8)" />
<polygon points="788.0,284.0 806.6,284.0 812.7,292.7 812.7,305.0 806.6,314.7 788.0,314.7 781.6,305.0 781.6,292.7" fill="rgba(186,186,186,0.72)" />
<polygon points="782.0,352.0 831.0,352.0 831.0,366.0 782.0,366.0" fill="rgba(175,175,175,0.75)" />
<ellipse cx="806.5" cy="366" rx="24.5" ry="4" fill="rgba(150,150,150,0.8)" />
<ellipse cx="806.5" cy="352" rx="24.5" ry="3" fill="rgba(120,120,120,0.6)" />
<polygon points="751.0,361.0 790.0,366.0 790.0,372.0 751.0,372.0" fill="rgba(110,110,110,0.55)" />
<polygon points="758.6,368.7 825.2,372.0 825.2,420.0 758.6,414.0" fill="rgba(160,160,160,0.8)" />
<polygon points="844.7,376.0 889.8,377.0 889.8,392.0 844.7,391.0" fill="rgba(165,165,165,0.8)" />
<ellipse cx="867.2" cy="376.5" rx="22.5" ry="3.5" fill="rgba(185,185,185,0.8)" />
<ellipse cx="867.2" cy="392" rx="22.5" ry="4" fill="rgba(120,120,120,0.7)" />
<polygon points="838.6,392.0 883.6,395.0 883.6,424.0 838.6,421.0" fill="rgba(170,170,170,0.8)" />
<polygon points="684.0,433.0 752.0,396.0 752.0,362.0 890.0,372.0 940.0,408.0 940.0,444.0 890.0,441.5 703.0,425.0" fill="rgba(120,120,120,0.36)" />
<polygon points="674.0,471.0 703.3,425.0 692.2,458.7" fill="rgba(110,110,110,0.3)" />
<polygon points="703.3,425.0 890.0,441.5 878.0,478.4 692.2,458.7" fill="rgba(178,178,178,0.7)" />
<polygon points="692.2,458.7 878.0,478.4 885.0,495.6 683.6,472.2" fill="rgba(72,72,72,0.75)" />
<polygon points="683.6,472.2 885.0,495.6 890.0,508.0 673.8,480.8" fill="rgba(105,105,105,0.7)" />
<rect x="680" y="469" width="12.0" height="4.0" fill="rgba(215,215,215,0.85)" />
<g opacity=".78">
<polygon points="759.7,483.4 790.0,462.0 813.0,461.0 800.0,470.0" fill="#6e2a55" />
<polygon points="817.0,463.0 856.0,491.6 840.0,491.0 813.0,468.0" fill="#7a2d5c" />
<polygon points="833.0,446.0 846.0,424.0 874.0,422.0 872.0,436.0 820.0,458.0" fill="#6d2c50" />
<polygon points="813.0,461.0 829.0,446.0 862.0,438.0 895.0,440.0 893.0,483.0 860.0,478.0" fill="#d3a0c2" />
<polygon points="813.0,461.0 785.0,452.0 786.0,470.0" fill="#d38fb8" />
<ellipse cx="787" cy="461" rx="5" ry="9.5" fill="#d38fb8"/>
<polygon points="815.0,457.0 874.0,450.6 876.0,471.0 815.0,464.0" fill="#e2806e" />
<polygon points="806.5,399.4 830.4,399.4 824.0,433.0 812.0,433.0" fill="#d48ab0" />
<polygon points="811.0,420.0 825.5,420.0 823.0,433.0 813.0,433.0" fill="#7e2d55" />
<path d="M798.6 419L813 463" stroke="#b4aa62" stroke-width="3.5" fill="none"/>
<rect x="813" y="433.5" width="11.0" height="27.5" fill="#8a8ac4" />
<rect x="813" y="463" width="11.0" height="24.5" fill="#3232a4" />
</g>
<polygon points="784.0,405.0 860.0,410.0 860.0,416.5 800.0,414.0" fill="rgba(226,112,80,.75)" />
<rect x="831" y="409" width="21.0" height="7.5" fill="#f41a08" />
<path d="M833 411h3m3 2h4m2-3h3m-9 4h2" stroke="#e8c020" stroke-width="1.2" fill="none"/>
<polygon points="640.0,497.0 674.0,481.0 712.0,488.0 885.0,520.0 885.0,592.0 690.0,560.0 640.0,540.0" fill="rgba(160,160,160,0.72)" />
<polygon points="712.5,488.4 882.6,514.0 882.6,520.2 720.7,497.7" fill="rgba(192,192,192,0.8)" />
<path d="M690 496.6L860 518" stroke="#444" stroke-width="1.4" fill="none"/>
<line x1="685.6" y1="527" x2="662.6" y2="544.6" stroke="rgba(92,92,92,0.7)" stroke-width="99" stroke-linecap="round"/>
<ellipse cx="662.6" cy="544.6" rx="48.4" ry="50.5" fill="rgba(158,158,158,0.85)" />
<line x1="796" y1="541" x2="771" y2="560" stroke="rgba(95,95,95,0.5)" stroke-width="105" stroke-linecap="round"/>
<ellipse cx="771" cy="560" rx="52" ry="53" fill="rgba(172,172,172,0.8)" />
<polygon points="720.0,535.0 798.0,549.0 798.0,562.0 720.0,548.0" fill="rgba(225,208,208,.55)" />
<line x1="814.5" y1="510" x2="790" y2="539" stroke="rgba(70,70,70,.8)" stroke-width="12"/>
<line x1="776" y1="551" x2="765" y2="562" stroke="rgba(125,125,125,.8)" stroke-width="11" stroke-linecap="round"/>
<path d="M744 471L685 518M756.7 481.5L708.5 514.8" stroke="rgba(56,56,56,.75)" stroke-width="2.6" fill="none"/>
<line x1="900.5" y1="558" x2="888.4" y2="577.5" stroke="rgba(90,90,90,0.72)" stroke-width="111" stroke-linecap="round"/>
<line x1="937.6" y1="491.4" x2="914.6" y2="530.7" stroke="rgba(56,62,128,.75)" stroke-width="11" stroke-linecap="round"/>
<ellipse cx="888.4" cy="577.5" rx="57" ry="55" fill="rgba(158,158,158,0.85)" />
<ellipse cx="661" cy="545" rx="8" ry="7" fill="#a9a9c6"/>
<ellipse cx="888" cy="576" rx="8" ry="7.5" fill="#a9a9c6"/>
<line x1="818.4" y1="317.0" x2="818.4" y2="351.0" stroke="url(#c15)" stroke-width="12"/>
<polygon points="800.5,316.0 812.5,316.0 812.5,343.0" fill="#0000f0" />
<line x1="768.2" y1="309.5" x2="800.4" y2="297.9" stroke="url(#c16)" stroke-width="13"/>
<circle cx="768.2" cy="309.5" r="6.8" fill="#0000ff"/>
<line x1="826.0" y1="318.8" x2="864.0" y2="300.3" stroke="url(#c17)" stroke-width="13.5"/>
<circle cx="826.0" cy="318.8" r="7.4" fill="#ff0000"/>
<line x1="863.5" y1="319.0" x2="863.5" y2="374.0" stroke="url(#c18)" stroke-width="5"/>
<line x1="870.0" y1="319.0" x2="870.0" y2="374.0" stroke="url(#c19)" stroke-width="8.5"/>
<line x1="826.0" y1="351.3" x2="934.0" y2="359.3" stroke="url(#c20)" stroke-width="10"/>
<line x1="829.0" y1="361.4" x2="946.0" y2="368.6" stroke="url(#c21)" stroke-width="10"/>
<line x1="906.0" y1="292.4" x2="943.0" y2="293.8" stroke="url(#c22)" stroke-width="5"/>
<line x1="900.4" y1="311.0" x2="900.4" y2="420.0" stroke="url(#c23)" stroke-width="11"/>
<line x1="904.0" y1="288.7" x2="956.0" y2="399.0" stroke="url(#c24)" stroke-width="8"/>
<line x1="897.0" y1="290.7" x2="952.0" y2="403.4" stroke="url(#c25)" stroke-width="12"/>
<line x1="890.7" y1="297.9" x2="1004.5" y2="306.1" stroke="url(#c26)" stroke-width="12.3"/>
<line x1="875.4" y1="300.0" x2="940.0" y2="424.0" stroke="url(#c27)" stroke-width="13"/>
<line x1="887.7" y1="416.8" x2="919.4" y2="419.8" stroke="url(#c28)" stroke-width="8"/>
<line x1="974.8" y1="378.9" x2="960.4" y2="395.0" stroke="url(#c29)" stroke-width="9"/>
<line x1="947.0" y1="374.0" x2="949.0" y2="388.0" stroke="url(#c30)" stroke-width="6"/>
<line x1="957.0" y1="400.5" x2="1077.5" y2="351.3" stroke="url(#c31)" stroke-width="9"/>
<line x1="953.0" y1="406.5" x2="1079.0" y2="355.0" stroke="url(#c32)" stroke-width="11"/>
<line x1="942.0" y1="426.0" x2="1076.0" y2="371.7" stroke="url(#c33)" stroke-width="12.3"/>
<line x1="966.6" y1="424.0" x2="1014.7" y2="519.3" stroke="url(#c34)" stroke-width="5"/>
<line x1="956.0" y1="425.0" x2="1008.6" y2="528.6" stroke="url(#c35)" stroke-width="11"/>
<line x1="929.7" y1="445.6" x2="1030.0" y2="454.8" stroke="url(#c36)" stroke-width="11"/>
<line x1="942.0" y1="431.0" x2="999.3" y2="552.0" stroke="url(#c37)" stroke-width="11.3"/>
<line x1="1001.4" y1="492.7" x2="1058.4" y2="498.4" stroke="url(#c38)" stroke-width="10"/>
<line x1="917.0" y1="465.0" x2="942.0" y2="465.0" stroke="url(#c39)" stroke-width="10"/>
<line x1="913.0" y1="474.0" x2="941.0" y2="475.0" stroke="url(#c40)" stroke-width="8"/>
<circle cx="954" cy="401" r="3" fill="#ff20b0"/>
<polygon points="925.0,425.0 938.0,418.0 944.0,436.0 930.0,440.0" fill="#ff20b0" />
<line x1="897.5" y1="427.0" x2="897.5" y2="515.0" stroke="url(#c41)" stroke-width="13"/>
<ellipse cx="897.5" cy="427.5" rx="6.5" ry="2" fill="#00a000" />
<line x1="905.5" y1="472.2" x2="941.0" y2="427.0" stroke="url(#c42)" stroke-width="14.5"/>
<circle cx="905.5" cy="472.2" r="8.2" fill="#ff0000"/>
<line x1="601.8" y1="590.5" x2="662.6" y2="544.6" stroke="url(#c43)" stroke-width="14"/>
<circle cx="601.8" cy="590.5" r="7.5" fill="#0000ff"/>
<line x1="854.0" y1="634.2" x2="888.4" y2="578.7" stroke="url(#c44)" stroke-width="14"/>
<circle cx="854.0" cy="634.2" r="8" fill="#0000ff"/>
<line x1="950.3" y1="574.0" x2="1041.0" y2="586.7" stroke="url(#c45)" stroke-width="13.8"/>
<line x1="668.4" y1="407.0" x2="671.8" y2="482.0" stroke="url(#c46)" stroke-width="13"/>
</svg>
</div>
</div></div>
</body></html>
